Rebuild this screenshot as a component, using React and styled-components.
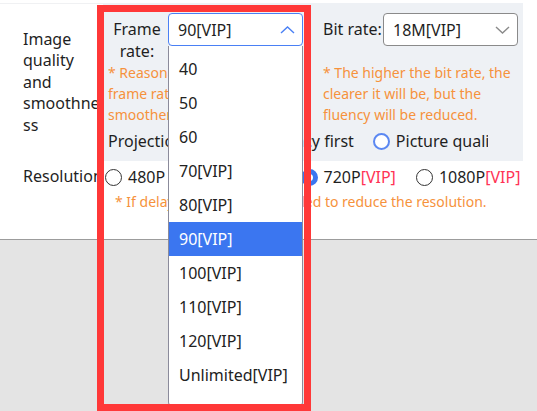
import React from 'react';
import styled, { createGlobalStyle } from 'styled-components';

const GlobalStyle = createGlobalStyle`
  html, body { margin: 0; padding: 0; background: #fff; }
  body {
    font-family: "Noto Sans", "Open Sans", sans-serif;
    color: #1f1f1f;
  }
`;

const Page = styled.div`
  position: relative;
  display: flex;
  flex-direction: column;
  min-height: 100vh;
  overflow: hidden;
`;

const Settings = styled.div`
  height: 239px;
  padding-top: 3px;
  box-sizing: border-box;
  background: #fff;
  flex-shrink: 0;
`;

const Footer = styled.div`
  flex: 1;
  background: #e4e4e4;
  border-top: 1px solid #9c9c9c;
`;

const Row = styled.div`
  display: flex;
  align-items: ${p => (p.top ? 'flex-start' : 'stretch')};
  margin-top: ${p => p.gap || 0}px;
`;

const RowLabel = styled.div`
  width: 80px;
  padding-left: 23px;
  flex-shrink: 0;
  display: flex;
  align-items: center;
  font-size: 16px;
  line-height: 21.6px;
  overflow-wrap: anywhere;
  white-space: ${p => (p.nowrap ? 'nowrap' : 'normal')};
  border-top: ${p => (p.line ? '1px solid #f0f1f3' : 'none')};
`;

const Panel = styled.div`
  width: 420px;
  box-sizing: border-box;
  background: #eef1f5;
  padding: 10px 5px 9px;
`;

const FieldGrid = styled.div`
  display: grid;
  grid-template-columns: 195px 195px;
  column-gap: 20px;
`;

const Field = styled.div`
  display: flex;
  align-items: flex-start;
`;

const FieldLabel = styled.div`
  width: 58px;
  flex-shrink: 0;
  padding-top: 5px;
  font-size: 16px;
  line-height: 22px;
  text-align: center;
  white-space: ${p => (p.nowrap ? 'nowrap' : 'normal')};
`;

const Select = styled.div`
  width: 135px;
  height: 33px;
  margin-left: 2px;
  box-sizing: border-box;
  display: flex;
  align-items: center;
  justify-content: space-between;
  padding: 0 7px 0 9px;
  background: #fff;
  border: 1px solid ${p => (p.open ? '#4a80f5' : '#8a8a8a')};
  border-radius: 4px;
  font-size: 16px;
`;

const Note = styled.div`
  font-size: 14px;
  line-height: 21px;
  color: #f6923c;
  margin-left: ${p => p.indent || 0}px;
  margin-top: ${p => p.gap || 0}px;
`;

const ModeRow = styled.div`
  display: flex;
  align-items: center;
  width: 380px;
  margin-top: 5px;
  overflow: hidden;
  white-space: nowrap;
  font-size: 16px;
  line-height: 22px;
`;

const ModeLabel = styled.span`
  margin-right: 4px;
`;

const Options = styled.div`
  display: flex;
  align-items: center;
  gap: ${p => p.gap}px;
  margin-left: ${p => p.offset || 0}px;
  white-space: nowrap;
  font-size: 16px;
  line-height: 22px;
`;

const Option = styled.label`
  display: flex;
  align-items: center;
  gap: 6px;
`;

const Radio = styled.span`
  width: 17px;
  height: 17px;
  box-sizing: border-box;
  border-radius: 50%;
  background: #fff;
  flex-shrink: 0;
  border: ${p =>
    p.checked ? '5px solid #3b76f0' : p.hover ? '2px solid #5b88f2' : '1px solid #333'};
`;

const Vip = styled.span`
  color: #ff3355;
`;

const Dropdown = styled.ul`
  position: absolute;
  left: 168px;
  top: 46px;
  width: 135px;
  height: 360px;
  box-sizing: border-box;
  margin: 0;
  padding: 6px 0 0;
  list-style: none;
  background: #fff;
  border: 1px solid #8b8b9b;
  border-top: none;
  border-radius: 0 0 4px 4px;
  z-index: 2;
`;

const Item = styled.li`
  height: 34px;
  line-height: 34px;
  padding-left: 10px;
  font-size: 16px;
  color: ${p => (p.active ? '#fff' : '#222')};
  background: ${p => (p.active ? '#3b76f0' : 'transparent')};
`;

const Highlight = styled.div`
  position: absolute;
  left: 97px;
  top: 5px;
  width: 214px;
  height: 406px;
  box-sizing: border-box;
  border: 7px solid #ff3838;
  pointer-events: none;
  z-index: 3;
`;

const Chevron = ({ up, color }) => (
  <svg width="15" height="8" viewBox="0 0 15 8" fill="none">
    <polyline
      points={up ? '1,7 7.5,1 14,7' : '1,1 7.5,7 14,1'}
      stroke={color}
      strokeWidth="1.4"
    />
  </svg>
);

const rates = ['40', '50', '60', '70[VIP]', '80[VIP]', '90[VIP]', '100[VIP]', '110[VIP]', '120[VIP]', 'Unlimited[VIP]'];

const resolutions = [
  { name: '480P' },
  { name: '540P', vip: true },
  { name: '720P', vip: true, checked: true },
  { name: '1080P', vip: true },
];

export default function App() {
  return (
    <Page>
      <GlobalStyle />
      <Settings>
        <Row>
          <RowLabel line>Image quality and smoothness</RowLabel>
          <Panel>
            <FieldGrid>
              <Field>
                <FieldLabel>Frame rate:</FieldLabel>
                <Select open>
                  <span>90[VIP]</span>
                  <Chevron up color="#4a80f5" />
                </Select>
              </Field>
              <Field>
                <FieldLabel nowrap>Bit rate:</FieldLabel>
                <Select>
                  <span>18M[VIP]</span>
                  <Chevron color="#8a8a8a" />
                </Select>
              </Field>
              <Note>* Reasonably increasing the frame rate makes the picture smoother.</Note>
              <Note>* The higher the bit rate, the clearer it will be, but the fluency will be reduced.</Note>
            </FieldGrid>
            <ModeRow>
              <ModeLabel>Projection mode:</ModeLabel>
              <Options gap={19}>
                <Option><Radio checked /><span>Fluency first</span></Option>
                <Option><Radio hover /><span>Picture quality first</span></Option>
              </Options>
            </ModeRow>
          </Panel>
        </Row>
        <Row top gap={5}>
          <RowLabel nowrap>Resolution</RowLabel>
          <Options gap={20} offset={2}>
            {resolutions.map(r => (
              <Option key={r.name}>
                <Radio checked={r.checked} />
                <span>{r.name}{r.vip && <Vip>[VIP]</Vip>}</span>
              </Option>
            ))}
          </Options>
        </Row>
        <Note indent={115} gap={3}>* If delayed, it is recommended to reduce the resolution.</Note>
      </Settings>
      <Footer />
      <Dropdown>
        {rates.map(r => (
          <Item key={r} active={r === '90[VIP]'}>{r}</Item>
        ))}
      </Dropdown>
      <Highlight />
    </Page>
  );
}
